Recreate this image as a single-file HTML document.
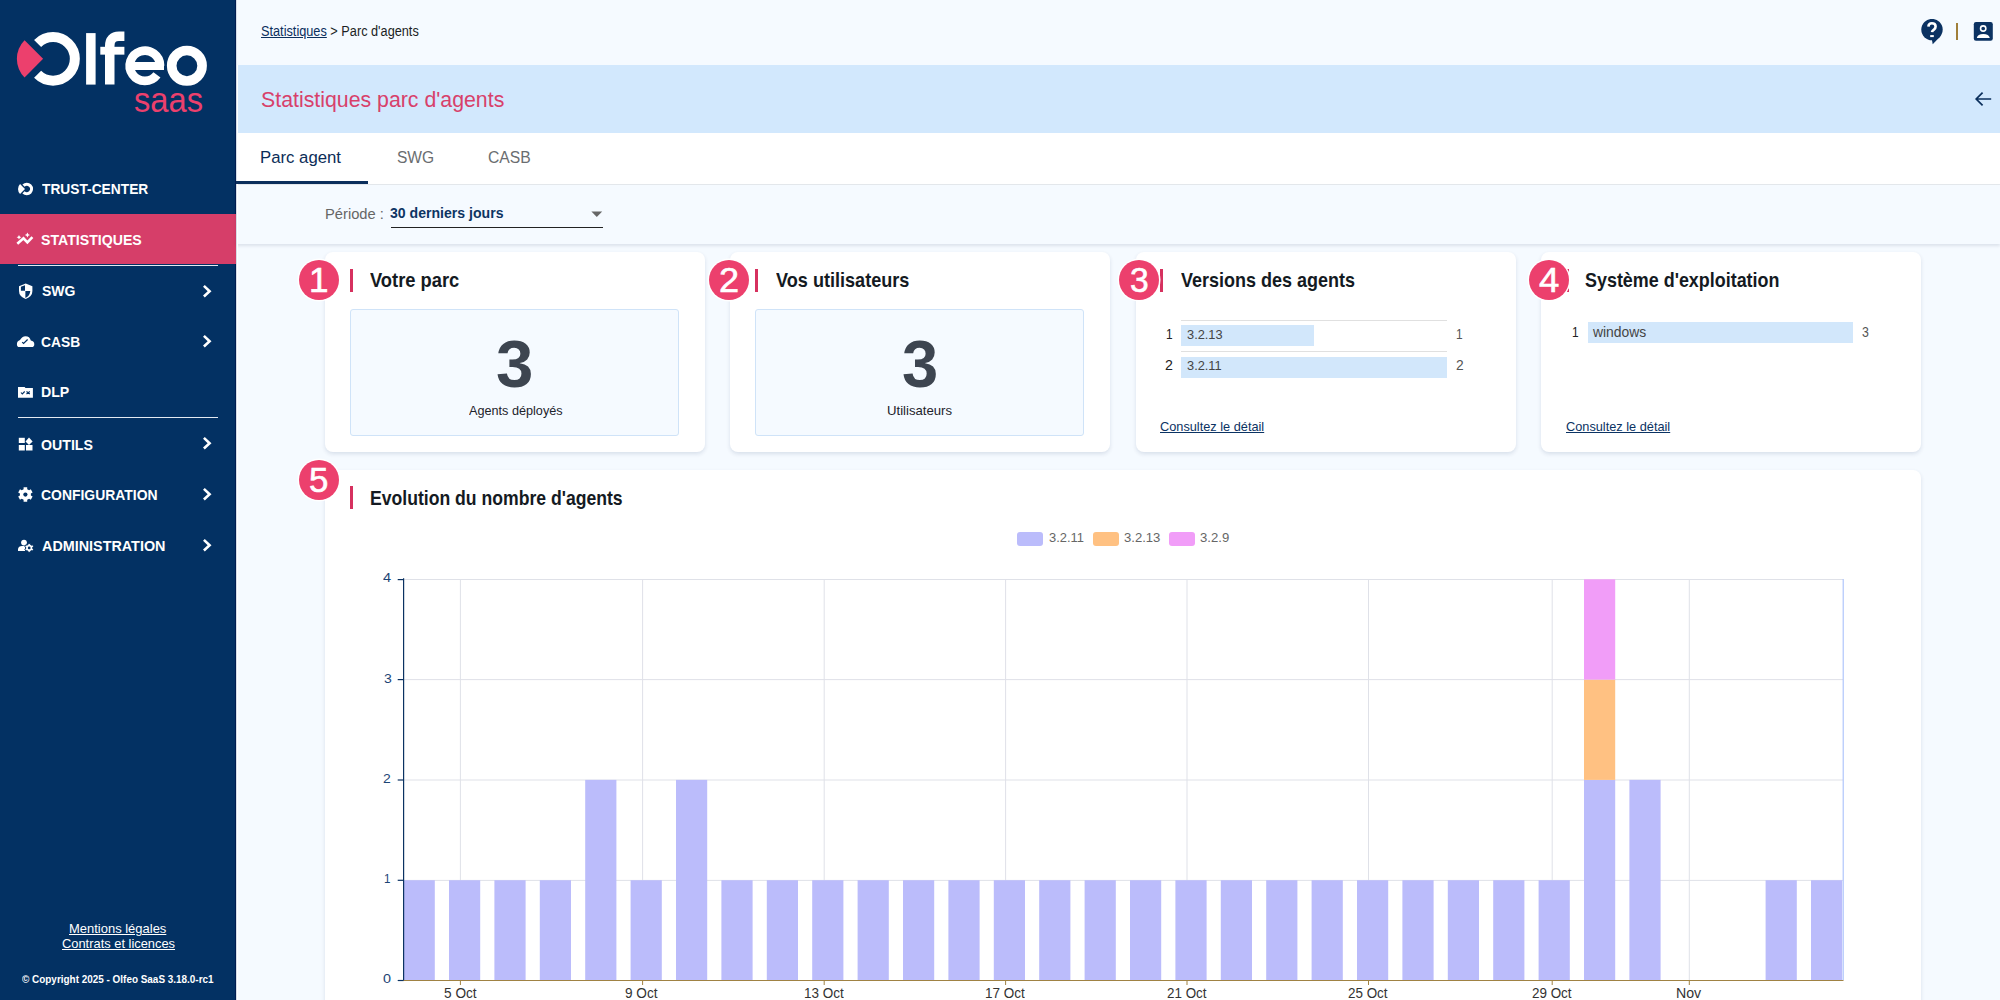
<!DOCTYPE html>
<html><head><meta charset="utf-8">
<style>
*{margin:0;padding:0;box-sizing:border-box}
html,body{width:2000px;height:1000px;overflow:hidden;background:#f5faff;font-family:"Liberation Sans",sans-serif}
.abs{position:absolute}
.tx{position:absolute;white-space:nowrap;transform-origin:0 0;line-height:normal}
#side{position:absolute;left:0;top:0;width:236px;height:1000px;background:#033163;border-right:1px solid #011c50}
.sep{position:absolute;left:18px;width:200px;height:1px;background:#e3e9f1}
#topbar{position:absolute;left:236px;top:0;width:1764px;height:65px;background:#f5faff}
#band{position:absolute;left:236px;top:65px;width:1764px;height:67.5px;background:#d2e8fd}
#tabs{position:absolute;left:236px;top:132.5px;width:1764px;height:52.5px;background:#fff;border-bottom:1px solid #e4e8ec}
#period{position:absolute;left:236px;top:185px;width:1764px;height:59px;background:#f5faff;box-shadow:0 2px 3px rgba(0,20,60,.10)}
.card{position:absolute;background:#fff;border-radius:8px;box-shadow:0 2px 4px rgba(0,30,80,.12)}
.badge{position:absolute;width:40px;height:40px;border-radius:50%;background:#ec406d;box-shadow:0 0 0 1.5px #fff}
.bar{position:absolute;width:3px;height:23px;background:#d6315f}
.kpi{position:absolute;background:#f5faff;border:1px solid #cfe3f8;border-radius:3px}
body.measure *{visibility:hidden !important}
body.measure .tx, body.measure .tx *{visibility:visible !important;color:#000 !important;text-decoration:none !important}
html.measure, body.measure{background:#fff !important}
</style></head>
<body>
<style>
.mi{position:absolute;left:0;width:236px;height:50px}
.mi svg{position:absolute}
.chev{position:absolute;left:201px}
</style>
<div id="side">
  <svg class="abs" style="left:0;top:0" width="236" height="130" viewBox="0 0 236 130">
    <path d="M43.1 58.85 L24.54 40.29 A26.25 26.25 0 0 0 24.54 77.41 Z" fill="#ec406d"/>
    <path d="M37.6 43.45 A21.8 21.8 0 1 1 37.6 74.25" fill="none" stroke="#fff" stroke-width="10"/>
    <rect x="86.1" y="33.1" width="9.5" height="51.5" fill="#fff"/>
    <path d="M109.75 84.6 V46 Q109.75 36.3 119 36.3 H124.4" fill="none" stroke="#fff" stroke-width="9.5"/>
    <rect x="100.3" y="46.8" width="24.1" height="7.85" fill="#fff"/>
    <path d="M160 65.75 A15.1 15.1 0 1 0 156.96 74.84" fill="none" stroke="#fff" stroke-width="8.8"/>
    <rect x="131" y="62" width="33" height="8" fill="#fff"/>
    <circle cx="186.9" cy="65.75" r="15.2" fill="none" stroke="#fff" stroke-width="9.6"/>
    <text x="134" y="111.7" font-family="Liberation Sans" font-size="35" fill="#ec406d" textLength="69" lengthAdjust="spacingAndGlyphs">saas</text>
  </svg>
  <div class="abs mi" style="top:163px"><svg style="left:16px;top:180px;top:17px" width="20" height="16" viewBox="16 180 20 16">
    <path d="M25 189 L20.05 184.05 A7 7 0 0 0 20.05 193.95 Z" fill="#fff"/>
    <path d="M23.5 185.65 A4.7 4.7 0 1 1 23.5 192.35" fill="none" stroke="#fff" stroke-width="3.1"/>
  </svg></div>
  <div class="abs mi" style="top:214px;background:#d63e69"><svg style="left:15px;top:18px" width="20" height="14" viewBox="15 232 20 14">
    <polyline points="17.3,243.8 23.5,238.3 27.4,242.4 32.4,237.1" fill="none" stroke="#fff" stroke-width="2.6" stroke-linejoin="miter"/>
    <path d="M19 235 L19.8 236.6 L21.4 237.3 L19.8 238 L19 239.6 L18.2 238 L16.6 237.3 L18.2 236.6Z" fill="#fff"/>
    <path d="M27.4 232.5 L28.3 234.2 L30 235 L28.3 235.8 L27.4 237.5 L26.5 235.8 L24.8 235 L26.5 234.2Z" fill="#fff"/>
  </svg></div>
  <div class="sep" style="top:265px"></div>
  <div class="abs mi" style="top:266px"><svg style="left:18px;top:17px" width="16" height="17" viewBox="18 283 16 17">
    <path d="M25.7 283.6 L32.4 286.2 V291 Q32.4 296.5 25.7 298.9 Q19 296.5 19 291 V286.2 Z" fill="#fff"/>
    <path d="M20.9 286.8 L25 285.3 V290.8 H20.9 Z" fill="#033163"/>
    <path d="M25.4 291 H30.3 Q29.9 295.9 25.4 298 Z" fill="#033163"/>
  </svg><svg class="chev" style="top:17px" width="14" height="16" viewBox="201 283 14 16"><polyline points="203.9,285.9 209.6,291.2 203.9,296.5" fill="none" stroke="#fff" stroke-width="2.6"/></svg></div>
  <div class="abs mi" style="top:316px"><svg style="left:16px;top:18px" width="20" height="14" viewBox="16 334 20 14">
    <path d="M18.3 347 Q16.9 346.9 16.9 344.2 Q16.9 341.1 20 340.1 Q22 336.3 25.5 336.3 Q29.8 336.3 30.8 340.6 Q34.3 341.3 34.3 344.2 Q34.3 347 31.8 347 Z" fill="#fff"/>
    <polyline points="22.2,342.1 23.6,343.5 27.6,339.5" fill="none" stroke="#033163" stroke-width="1.2"/>
  </svg><svg class="chev" style="top:17px" width="14" height="16" viewBox="201 283 14 16"><polyline points="203.9,285.9 209.6,291.2 203.9,296.5" fill="none" stroke="#fff" stroke-width="2.6"/></svg></div>
  <div class="abs mi" style="top:367px"><svg style="left:16px;top:18px" width="20" height="14" viewBox="16 385 20 14">
    <path d="M18 387 H24.6 L25.5 388 H32.9 V397.8 H18 Z" fill="#fff"/>
    <polyline points="21,392.5 22.3,394 24.7,391.5" fill="none" stroke="#033163" stroke-width="1.1"/>
    <path d="M26.5 391.5 L29.8 394 M29.8 391.5 L26.5 394" stroke="#033163" stroke-width="1.1"/>
  </svg></div>
  <div class="sep" style="top:417px"></div>
  <div class="abs mi" style="top:418px"><svg style="left:16px;top:18px" width="20" height="15" viewBox="16 436 20 15">
    <rect x="18.8" y="437.8" width="6" height="5.2" fill="#fff"/>
    <path d="M29 437.6 L32.6 441.5 L29 445 L25.5 441.5 Z" fill="#fff"/>
    <rect x="18.8" y="445" width="6" height="5.5" fill="#fff"/>
    <rect x="26" y="445" width="6.5" height="5.5" fill="#fff"/>
  </svg><svg class="chev" style="top:17px" width="14" height="16" viewBox="201 283 14 16"><polyline points="203.9,285.9 209.6,291.2 203.9,296.5" fill="none" stroke="#fff" stroke-width="2.6"/></svg></div>
  <div class="abs mi" style="top:469px"><svg style="left:16px;top:17px" width="20" height="17" viewBox="16 486 20 17">
    <path d="M23.60 489.20 L23.60 487.22 L27.20 487.22 L27.20 489.20 L29.09 490.29 L30.81 489.30 L32.61 492.42 L30.89 493.41 L30.89 495.59 L32.61 496.58 L30.81 499.70 L29.09 498.71 L27.20 499.80 L27.20 501.78 L23.60 501.78 L23.60 499.80 L21.71 498.71 L19.99 499.70 L18.19 496.58 L19.91 495.59 L19.91 493.41 L18.19 492.42 L19.99 489.30 L21.71 490.29Z" fill="#fff"/>
    <circle cx="25.4" cy="494.6" r="2.1" fill="#033163"/>
  </svg><svg class="chev" style="top:17px" width="14" height="16" viewBox="201 283 14 16"><polyline points="203.9,285.9 209.6,291.2 203.9,296.5" fill="none" stroke="#fff" stroke-width="2.6"/></svg></div>
  <div class="abs mi" style="top:520px"><svg style="left:16px;top:18px" width="20" height="15" viewBox="16 538 20 15">
    <circle cx="24" cy="542.6" r="2.9" fill="#fff"/>
    <path d="M18 551 V549 Q18.5 546 22 546 H25 V551 Z" fill="#fff"/>
    <path d="M28.10 544.47 L28.10 543.43 L30.30 543.43 L30.30 544.47 L31.62 545.23 L32.52 544.71 L33.62 546.62 L32.72 547.14 L32.72 548.66 L33.62 549.18 L32.52 551.09 L31.62 550.57 L30.30 551.33 L30.30 552.37 L28.10 552.37 L28.10 551.33 L26.78 550.57 L25.88 551.09 L24.78 549.18 L25.68 548.66 L25.68 547.14 L24.78 546.62 L25.88 544.71 L26.78 545.23Z" fill="#fff" stroke="#033163" stroke-width="0.9"/><circle cx="29.2" cy="547.9" r="1.4" fill="#033163"/>
  </svg><svg class="chev" style="top:17px" width="14" height="16" viewBox="201 283 14 16"><polyline points="203.9,285.9 209.6,291.2 203.9,296.5" fill="none" stroke="#fff" stroke-width="2.6"/></svg></div>
  </div>

<div id="topbar"></div>
<div id="band"></div>
<div id="tabs"></div>
<div id="period"></div>
<div class="abs" style="left:236px;top:0;width:1px;height:1000px;background:#d5dee8"></div>
<div class="abs" style="left:237px;top:65px;width:1px;height:935px;background:#fff"></div>
<div class="abs" style="left:236px;top:181px;width:132px;height:3px;background:#0b2f5c"></div>
<div class="abs" style="left:391px;top:226.8px;width:211.5px;height:1.4px;background:#222"></div>
<svg class="abs" style="left:591px;top:211px" width="12" height="7" viewBox="0 0 12 7"><path d="M0.4 0.6 H11.2 L5.8 6Z" fill="#666"/></svg>
<svg class="abs" style="left:1921px;top:19px" width="24" height="26" viewBox="0 0 24 26">
  <circle cx="11" cy="10.6" r="10.7" fill="#0b3262"/>
  <path d="M10.6 19 L11.7 25.2 L19.5 17.2 Z" fill="#0b3262"/>
  <path d="M7.4 7.6 Q7.6 4.3 10.9 4.3 Q14.6 4.3 14.6 7.5 Q14.6 9.4 12.9 10.6 Q11.1 11.8 11 13.2" fill="none" stroke="#fff" stroke-width="2.6"/>
  <rect x="9.2" y="16.1" width="3.6" height="2.0" fill="#fff"/>
</svg>
<div class="abs" style="left:1956px;top:23px;width:2px;height:17px;background:#a07f3a"></div>
<svg class="abs" style="left:1973px;top:22px" width="21" height="19" viewBox="0 0 21 19">
  <rect x="0.8" y="0" width="19" height="18.8" rx="2.2" fill="#0b3262"/>
  <circle cx="10.2" cy="6.5" r="2.65" fill="none" stroke="#fff" stroke-width="1.6"/>
  <path d="M3.8 15.9 Q4.6 11.9 10.3 11.9 Q16 11.9 16.8 15.9Z" fill="#fff"/>
</svg>
<svg class="abs" style="left:1974px;top:91px" width="18" height="16" viewBox="0 0 18 16">
  <path d="M17.2 8 H2.3 M8.6 1.6 L2.2 8 L8.6 14.4" fill="none" stroke="#0b2f5c" stroke-width="1.7"/>
</svg>

<div class="card" style="left:325px;top:252px;width:380px;height:200px"></div>
<div class="card" style="left:729.8px;top:252px;width:380.5px;height:200px"></div>
<div class="card" style="left:1135.5px;top:252px;width:380px;height:200px"></div>
<div class="card" style="left:1541px;top:252px;width:380px;height:200px"></div>
<div class="card" style="left:325px;top:469.5px;width:1596px;height:600px"></div>

<div class="bar" style="left:350px;top:269px"></div>
<div class="bar" style="left:755px;top:269px"></div>
<div class="bar" style="left:1160px;top:269px"></div>
<div class="bar" style="left:1566px;top:269px"></div>
<div class="bar" style="left:350px;top:486px"></div>

<div class="kpi" style="left:350px;top:309px;width:329px;height:127px"></div>
<div class="kpi" style="left:755px;top:309px;width:329px;height:127px"></div>

<div class="abs" style="left:1181px;top:320px;width:266px;height:1px;background:#e0e0e0"></div>
<div class="abs" style="left:1181px;top:351px;width:266px;height:1px;background:#e0e0e0"></div>
<div class="abs" style="left:1181.4px;top:325.3px;width:132.7px;height:20.5px;background:#d2e7fb"></div>
<div class="abs" style="left:1181.4px;top:356.9px;width:265.6px;height:20.7px;background:#d2e7fb"></div>
<div class="abs" style="left:1587.7px;top:322.2px;width:265.5px;height:20.8px;background:#d2e7fb"></div>

<div class="badge" style="left:299px;top:259.5px"></div>
<div class="badge" style="left:709px;top:259.5px"></div>
<div class="badge" style="left:1119px;top:259.5px"></div>
<div class="badge" style="left:1529px;top:259.5px"></div>
<div class="badge" style="left:299px;top:459.8px"></div>

<div class="abs" style="left:1017px;top:532px;width:26px;height:14.4px;border-radius:3px;background:#bbbcfb"></div>
<div class="abs" style="left:1093px;top:532px;width:26px;height:14.4px;border-radius:3px;background:#ffc182"></div>
<div class="abs" style="left:1169px;top:532px;width:26px;height:14.4px;border-radius:3px;background:#f19df8"></div>
<svg class="abs" style="left:0;top:0" width="2000" height="1000" viewBox="0 0 2000 1000">
<line x1="403" y1="579.5" x2="1843" y2="579.5" stroke="#dfe1e8" stroke-width="1"/>
<line x1="403" y1="679.6" x2="1843" y2="679.6" stroke="#dfe1e8" stroke-width="1"/>
<line x1="403" y1="780.0" x2="1843" y2="780.0" stroke="#dfe1e8" stroke-width="1"/>
<line x1="403" y1="880.4" x2="1843" y2="880.4" stroke="#dfe1e8" stroke-width="1"/>
<line x1="460.4" y1="579" x2="460.4" y2="980" stroke="#dfe1e8" stroke-width="1"/>
<line x1="642.6" y1="579" x2="642.6" y2="980" stroke="#dfe1e8" stroke-width="1"/>
<line x1="824.2" y1="579" x2="824.2" y2="980" stroke="#dfe1e8" stroke-width="1"/>
<line x1="1005.6" y1="579" x2="1005.6" y2="980" stroke="#dfe1e8" stroke-width="1"/>
<line x1="1187.0" y1="579" x2="1187.0" y2="980" stroke="#dfe1e8" stroke-width="1"/>
<line x1="1368.5" y1="579" x2="1368.5" y2="980" stroke="#dfe1e8" stroke-width="1"/>
<line x1="1552.2" y1="579" x2="1552.2" y2="980" stroke="#dfe1e8" stroke-width="1"/>
<line x1="1689.3" y1="579" x2="1689.3" y2="980" stroke="#dfe1e8" stroke-width="1"/>
<rect x="403.60" y="880.2" width="31.2" height="100.20" fill="#bbbcfb"/>
<rect x="449.00" y="880.2" width="31.2" height="100.20" fill="#bbbcfb"/>
<rect x="494.40" y="880.2" width="31.2" height="100.20" fill="#bbbcfb"/>
<rect x="539.80" y="880.2" width="31.2" height="100.20" fill="#bbbcfb"/>
<rect x="585.20" y="779.9" width="31.2" height="200.50" fill="#bbbcfb"/>
<rect x="630.60" y="880.2" width="31.2" height="100.20" fill="#bbbcfb"/>
<rect x="676.00" y="779.9" width="31.2" height="200.50" fill="#bbbcfb"/>
<rect x="721.40" y="880.2" width="31.2" height="100.20" fill="#bbbcfb"/>
<rect x="766.80" y="880.2" width="31.2" height="100.20" fill="#bbbcfb"/>
<rect x="812.20" y="880.2" width="31.2" height="100.20" fill="#bbbcfb"/>
<rect x="857.60" y="880.2" width="31.2" height="100.20" fill="#bbbcfb"/>
<rect x="903.00" y="880.2" width="31.2" height="100.20" fill="#bbbcfb"/>
<rect x="948.40" y="880.2" width="31.2" height="100.20" fill="#bbbcfb"/>
<rect x="993.80" y="880.2" width="31.2" height="100.20" fill="#bbbcfb"/>
<rect x="1039.20" y="880.2" width="31.2" height="100.20" fill="#bbbcfb"/>
<rect x="1084.60" y="880.2" width="31.2" height="100.20" fill="#bbbcfb"/>
<rect x="1130.00" y="880.2" width="31.2" height="100.20" fill="#bbbcfb"/>
<rect x="1175.40" y="880.2" width="31.2" height="100.20" fill="#bbbcfb"/>
<rect x="1220.80" y="880.2" width="31.2" height="100.20" fill="#bbbcfb"/>
<rect x="1266.20" y="880.2" width="31.2" height="100.20" fill="#bbbcfb"/>
<rect x="1311.60" y="880.2" width="31.2" height="100.20" fill="#bbbcfb"/>
<rect x="1357.00" y="880.2" width="31.2" height="100.20" fill="#bbbcfb"/>
<rect x="1402.40" y="880.2" width="31.2" height="100.20" fill="#bbbcfb"/>
<rect x="1447.80" y="880.2" width="31.2" height="100.20" fill="#bbbcfb"/>
<rect x="1493.20" y="880.2" width="31.2" height="100.20" fill="#bbbcfb"/>
<rect x="1538.60" y="880.2" width="31.2" height="100.20" fill="#bbbcfb"/>
<rect x="1584.00" y="779.9" width="31.2" height="200.50" fill="#bbbcfb"/>
<rect x="1584.00" y="679.6" width="31.2" height="100.30" fill="#ffc182"/>
<rect x="1584.00" y="579.3" width="31.2" height="100.30" fill="#f19df8"/>
<rect x="1629.40" y="779.9" width="31.2" height="200.50" fill="#bbbcfb"/>
<rect x="1765.60" y="880.2" width="31.2" height="100.20" fill="#bbbcfb"/>
<rect x="1811.00" y="880.2" width="31.2" height="100.20" fill="#bbbcfb"/>
<line x1="403.6" y1="578.2" x2="403.6" y2="981" stroke="#0b3262" stroke-width="1.2"/>
<line x1="1843.2" y1="579" x2="1843.2" y2="980" stroke="#a9c1fb" stroke-width="1.1"/>
<line x1="403" y1="980.5" x2="1843.5" y2="980.5" stroke="#a08243" stroke-width="1.2"/>
<line x1="460.4" y1="981" x2="460.4" y2="985" stroke="#a08243" stroke-width="1"/>
<line x1="642.6" y1="981" x2="642.6" y2="985" stroke="#a08243" stroke-width="1"/>
<line x1="824.2" y1="981" x2="824.2" y2="985" stroke="#a08243" stroke-width="1"/>
<line x1="1005.6" y1="981" x2="1005.6" y2="985" stroke="#a08243" stroke-width="1"/>
<line x1="1187.0" y1="981" x2="1187.0" y2="985" stroke="#a08243" stroke-width="1"/>
<line x1="1368.5" y1="981" x2="1368.5" y2="985" stroke="#a08243" stroke-width="1"/>
<line x1="1552.2" y1="981" x2="1552.2" y2="985" stroke="#a08243" stroke-width="1"/>
<line x1="1689.3" y1="981" x2="1689.3" y2="985" stroke="#a08243" stroke-width="1"/>
<line x1="397.7" y1="579.6" x2="403.6" y2="579.6" stroke="#0b3262" stroke-width="1.2"/>
<line x1="397.7" y1="679.6" x2="403.6" y2="679.6" stroke="#0b3262" stroke-width="1.2"/>
<line x1="397.7" y1="780.0" x2="403.6" y2="780.0" stroke="#0b3262" stroke-width="1.2"/>
<line x1="397.7" y1="880.3" x2="403.6" y2="880.3" stroke="#0b3262" stroke-width="1.2"/>
<line x1="397.7" y1="980.5" x2="403.6" y2="980.5" stroke="#0b3262" stroke-width="1.2"/>
</svg>
<div class="tx" id="t0" style="left:42.36px;top:180.00px;font-size:15.1px;color:#fff;font-weight:bold;transform:scaleX(0.9116);">TRUST-CENTER<i class="bl" style="display:inline-block;width:0;height:0;vertical-align:baseline"></i></div>
<div class="tx" id="t1" style="left:41.39px;top:230.81px;font-size:15.1px;color:#fff;font-weight:bold;transform:scaleX(0.9360);">STATISTIQUES<i class="bl" style="display:inline-block;width:0;height:0;vertical-align:baseline"></i></div>
<div class="tx" id="t2" style="left:41.84px;top:282.21px;font-size:15.1px;color:#fff;font-weight:bold;transform:scaleX(0.9280);">SWG<i class="bl" style="display:inline-block;width:0;height:0;vertical-align:baseline"></i></div>
<div class="tx" id="t3" style="left:41.14px;top:332.61px;font-size:15.1px;color:#fff;font-weight:bold;transform:scaleX(0.9142);">CASB<i class="bl" style="display:inline-block;width:0;height:0;vertical-align:baseline"></i></div>
<div class="tx" id="t4" style="left:41.15px;top:383.00px;font-size:15.1px;color:#fff;font-weight:bold;transform:scaleX(0.9373);">DLP<i class="bl" style="display:inline-block;width:0;height:0;vertical-align:baseline"></i></div>
<div class="tx" id="t5" style="left:41.10px;top:435.50px;font-size:15.1px;color:#fff;font-weight:bold;transform:scaleX(0.9379);">OUTILS<i class="bl" style="display:inline-block;width:0;height:0;vertical-align:baseline"></i></div>
<div class="tx" id="t6" style="left:41.11px;top:486.21px;font-size:15.1px;color:#fff;font-weight:bold;transform:scaleX(0.9226);">CONFIGURATION<i class="bl" style="display:inline-block;width:0;height:0;vertical-align:baseline"></i></div>
<div class="tx" id="t7" style="left:41.63px;top:536.71px;font-size:15.1px;color:#fff;font-weight:bold;transform:scaleX(0.9519);">ADMINISTRATION<i class="bl" style="display:inline-block;width:0;height:0;vertical-align:baseline"></i></div>
<div class="tx" id="t8" style="left:69.33px;top:921.41px;font-size:13.6px;color:#fff;transform:scaleX(0.9542);text-decoration:underline">Mentions légales<i class="bl" style="display:inline-block;width:0;height:0;vertical-align:baseline"></i></div>
<div class="tx" id="t9" style="left:61.67px;top:936.21px;font-size:13.6px;color:#fff;transform:scaleX(0.9469);text-decoration:underline">Contrats et licences<i class="bl" style="display:inline-block;width:0;height:0;vertical-align:baseline"></i></div>
<div class="tx" id="t10" style="left:21.84px;top:973.21px;font-size:11.3px;color:#fff;font-weight:bold;transform:scaleX(0.8786);">© Copyright 2025 - Olfeo SaaS 3.18.0-rc1<i class="bl" style="display:inline-block;width:0;height:0;vertical-align:baseline"></i></div>
<div class="tx" id="t11" style="left:260.84px;top:23.51px;font-size:13.8px;color:#1b1f24;transform:scaleX(0.9227);"><span style="color:#0b2f5c;text-decoration:underline">Statistiques</span> &gt; Parc d'agents<i class="bl" style="display:inline-block;width:0;height:0;vertical-align:baseline"></i></div>
<div class="tx" id="t12" style="left:260.81px;top:86.60px;font-size:21.6px;color:#d8406a;transform:scaleX(0.9866);">Statistiques parc d'agents<i class="bl" style="display:inline-block;width:0;height:0;vertical-align:baseline"></i></div>
<div class="tx" id="t13" style="left:260.44px;top:147.21px;font-size:17.4px;color:#0c2d57;transform:scaleX(0.9631);">Parc agent<i class="bl" style="display:inline-block;width:0;height:0;vertical-align:baseline"></i></div>
<div class="tx" id="t14" style="left:396.53px;top:147.21px;font-size:17.4px;color:#6a6d70;transform:scaleX(0.8944);">SWG<i class="bl" style="display:inline-block;width:0;height:0;vertical-align:baseline"></i></div>
<div class="tx" id="t15" style="left:487.90px;top:147.21px;font-size:17.4px;color:#6a6d70;transform:scaleX(0.9036);">CASB<i class="bl" style="display:inline-block;width:0;height:0;vertical-align:baseline"></i></div>
<div class="tx" id="t16" style="left:324.84px;top:205.00px;font-size:15.1px;color:#666;transform:scaleX(0.9754);">Période :<i class="bl" style="display:inline-block;width:0;height:0;vertical-align:baseline"></i></div>
<div class="tx" id="t17" style="left:390.49px;top:204.30px;font-size:15.4px;color:#0d3563;font-weight:bold;transform:scaleX(0.9151);">30 derniers jours<i class="bl" style="display:inline-block;width:0;height:0;vertical-align:baseline"></i></div>
<div class="tx" id="t18" style="left:370.38px;top:269.01px;font-size:20.1px;color:#141a22;font-weight:bold;transform:scaleX(0.9123);">Votre parc<i class="bl" style="display:inline-block;width:0;height:0;vertical-align:baseline"></i></div>
<div class="tx" id="t19" style="left:775.74px;top:269.01px;font-size:20.1px;color:#141a22;font-weight:bold;transform:scaleX(0.9007);">Vos utilisateurs<i class="bl" style="display:inline-block;width:0;height:0;vertical-align:baseline"></i></div>
<div class="tx" id="t20" style="left:1180.81px;top:269.01px;font-size:20.1px;color:#141a22;font-weight:bold;transform:scaleX(0.8959);">Versions des agents<i class="bl" style="display:inline-block;width:0;height:0;vertical-align:baseline"></i></div>
<div class="tx" id="t21" style="left:1584.82px;top:269.01px;font-size:20.1px;color:#141a22;font-weight:bold;transform:scaleX(0.8917);">Système d'exploitation<i class="bl" style="display:inline-block;width:0;height:0;vertical-align:baseline"></i></div>
<div class="tx" id="t22" style="left:369.67px;top:486.51px;font-size:20.1px;color:#141a22;font-weight:bold;transform:scaleX(0.8763);">Evolution du nombre d'agents<i class="bl" style="display:inline-block;width:0;height:0;vertical-align:baseline"></i></div>
<div class="tx" id="t23" style="left:496.25px;top:326.21px;font-size:66px;color:#3d4550;font-weight:bold;transform:scaleX(1.0165);">3<i class="bl" style="display:inline-block;width:0;height:0;vertical-align:baseline"></i></div>
<div class="tx" id="t24" style="left:901.94px;top:326.21px;font-size:66px;color:#3d4550;font-weight:bold;transform:scaleX(0.9855);">3<i class="bl" style="display:inline-block;width:0;height:0;vertical-align:baseline"></i></div>
<div class="tx" id="t25" style="left:468.65px;top:402.50px;font-size:13.6px;color:#1d232b;transform:scaleX(0.9312);">Agents déployés<i class="bl" style="display:inline-block;width:0;height:0;vertical-align:baseline"></i></div>
<div class="tx" id="t26" style="left:887.23px;top:402.50px;font-size:13.6px;color:#1d232b;transform:scaleX(0.9677);">Utilisateurs<i class="bl" style="display:inline-block;width:0;height:0;vertical-align:baseline"></i></div>
<div class="tx" id="t27" style="left:1165.67px;top:325.61px;font-size:14px;color:#222;transform:scaleX(0.8500);">1<i class="bl" style="display:inline-block;width:0;height:0;vertical-align:baseline"></i></div>
<div class="tx" id="t28" style="left:1186.85px;top:326.81px;font-size:13.6px;color:#444;transform:scaleX(0.9426);">3.2.13<i class="bl" style="display:inline-block;width:0;height:0;vertical-align:baseline"></i></div>
<div class="tx" id="t29" style="left:1455.68px;top:325.61px;font-size:14px;color:#555;transform:scaleX(0.8500);">1<i class="bl" style="display:inline-block;width:0;height:0;vertical-align:baseline"></i></div>
<div class="tx" id="t30" style="left:1164.79px;top:357.11px;font-size:14px;color:#222;transform:scaleX(1.0145);">2<i class="bl" style="display:inline-block;width:0;height:0;vertical-align:baseline"></i></div>
<div class="tx" id="t31" style="left:1186.87px;top:358.11px;font-size:13.6px;color:#444;transform:scaleX(0.9425);">3.2.11<i class="bl" style="display:inline-block;width:0;height:0;vertical-align:baseline"></i></div>
<div class="tx" id="t32" style="left:1455.58px;top:357.11px;font-size:14px;color:#555;transform:scaleX(0.9869);">2<i class="bl" style="display:inline-block;width:0;height:0;vertical-align:baseline"></i></div>
<div class="tx" id="t33" style="left:1571.60px;top:323.50px;font-size:14px;color:#222;transform:scaleX(0.8500);">1<i class="bl" style="display:inline-block;width:0;height:0;vertical-align:baseline"></i></div>
<div class="tx" id="t34" style="left:1592.77px;top:324.76px;font-size:13.8px;color:#444;transform:scaleX(1.0072);">windows<i class="bl" style="display:inline-block;width:0;height:0;vertical-align:baseline"></i></div>
<div class="tx" id="t35" style="left:1862.21px;top:323.91px;font-size:14px;color:#555;transform:scaleX(0.8819);">3<i class="bl" style="display:inline-block;width:0;height:0;vertical-align:baseline"></i></div>
<div class="tx" id="t36" style="left:1159.87px;top:419.11px;font-size:13.3px;color:#0b3363;transform:scaleX(0.9590);text-decoration:underline">Consultez le détail<i class="bl" style="display:inline-block;width:0;height:0;vertical-align:baseline"></i></div>
<div class="tx" id="t37" style="left:1565.69px;top:419.11px;font-size:13.3px;color:#0b3363;transform:scaleX(0.9590);text-decoration:underline">Consultez le détail<i class="bl" style="display:inline-block;width:0;height:0;vertical-align:baseline"></i></div>
<div class="tx" id="t38" style="left:1048.83px;top:530.25px;font-size:13.6px;color:#666;transform:scaleX(0.9493);">3.2.11<i class="bl" style="display:inline-block;width:0;height:0;vertical-align:baseline"></i></div>
<div class="tx" id="t39" style="left:1124.36px;top:530.25px;font-size:13.6px;color:#666;transform:scaleX(0.9629);">3.2.13<i class="bl" style="display:inline-block;width:0;height:0;vertical-align:baseline"></i></div>
<div class="tx" id="t40" style="left:1199.78px;top:530.25px;font-size:13.6px;color:#666;transform:scaleX(0.9651);">3.2.9<i class="bl" style="display:inline-block;width:0;height:0;vertical-align:baseline"></i></div>
<div class="tx" id="t41" style="left:309.21px;top:260.01px;font-size:35px;color:#fff;transform:scaleX(1.0022);-webkit-text-stroke:0.6px #fff">1<i class="bl" style="display:inline-block;width:0;height:0;vertical-align:baseline"></i></div>
<div class="tx" id="t42" style="left:718.86px;top:259.81px;font-size:35px;color:#fff;transform:scaleX(1.0313);-webkit-text-stroke:0.6px #fff">2<i class="bl" style="display:inline-block;width:0;height:0;vertical-align:baseline"></i></div>
<div class="tx" id="t43" style="left:1129.50px;top:260.01px;font-size:35px;color:#fff;transform:scaleX(0.9608);-webkit-text-stroke:0.6px #fff">3<i class="bl" style="display:inline-block;width:0;height:0;vertical-align:baseline"></i></div>
<div class="tx" id="t44" style="left:1539.37px;top:260.01px;font-size:35px;color:#fff;transform:scaleX(1.0437);-webkit-text-stroke:0.6px #fff">4<i class="bl" style="display:inline-block;width:0;height:0;vertical-align:baseline"></i></div>
<div class="tx" id="t45" style="left:308.81px;top:459.71px;font-size:35px;color:#fff;transform:scaleX(0.9959);-webkit-text-stroke:0.6px #fff">5<i class="bl" style="display:inline-block;width:0;height:0;vertical-align:baseline"></i></div>
<div class="tx" id="t46" style="left:382.92px;top:570.01px;font-size:13.5px;color:#1c4474;transform:scaleX(1.0800);">4<i class="bl" style="display:inline-block;width:0;height:0;vertical-align:baseline"></i></div>
<div class="tx" id="t47" style="left:383.60px;top:670.90px;font-size:13.5px;color:#1c4474;transform:scaleX(1.0390);">3<i class="bl" style="display:inline-block;width:0;height:0;vertical-align:baseline"></i></div>
<div class="tx" id="t48" style="left:383.11px;top:771.01px;font-size:13.5px;color:#1c4474;transform:scaleX(1.0346);">2<i class="bl" style="display:inline-block;width:0;height:0;vertical-align:baseline"></i></div>
<div class="tx" id="t49" style="left:383.70px;top:871.01px;font-size:13.5px;color:#1c4474;transform:scaleX(0.8611);">1<i class="bl" style="display:inline-block;width:0;height:0;vertical-align:baseline"></i></div>
<div class="tx" id="t50" style="left:382.85px;top:971.01px;font-size:13.5px;color:#1c4474;transform:scaleX(1.0673);">0<i class="bl" style="display:inline-block;width:0;height:0;vertical-align:baseline"></i></div>
<div class="tx" id="t51" style="left:443.59px;top:984.81px;font-size:14.2px;color:#333;transform:scaleX(0.9617);">5 Oct<i class="bl" style="display:inline-block;width:0;height:0;vertical-align:baseline"></i></div>
<div class="tx" id="t52" style="left:625.24px;top:984.81px;font-size:14.2px;color:#333;transform:scaleX(0.9603);">9 Oct<i class="bl" style="display:inline-block;width:0;height:0;vertical-align:baseline"></i></div>
<div class="tx" id="t53" style="left:803.60px;top:984.81px;font-size:14.2px;color:#333;transform:scaleX(0.9516);">13 Oct<i class="bl" style="display:inline-block;width:0;height:0;vertical-align:baseline"></i></div>
<div class="tx" id="t54" style="left:985.00px;top:984.81px;font-size:14.2px;color:#333;transform:scaleX(0.9521);">17 Oct<i class="bl" style="display:inline-block;width:0;height:0;vertical-align:baseline"></i></div>
<div class="tx" id="t55" style="left:1166.99px;top:984.81px;font-size:14.2px;color:#333;transform:scaleX(0.9452);">21 Oct<i class="bl" style="display:inline-block;width:0;height:0;vertical-align:baseline"></i></div>
<div class="tx" id="t56" style="left:1348.40px;top:984.81px;font-size:14.2px;color:#333;transform:scaleX(0.9462);">25 Oct<i class="bl" style="display:inline-block;width:0;height:0;vertical-align:baseline"></i></div>
<div class="tx" id="t57" style="left:1532.02px;top:984.81px;font-size:14.2px;color:#333;transform:scaleX(0.9466);">29 Oct<i class="bl" style="display:inline-block;width:0;height:0;vertical-align:baseline"></i></div>
<div class="tx" id="t58" style="left:1675.76px;top:984.81px;font-size:14.2px;color:#333;transform:scaleX(0.9989);">Nov<i class="bl" style="display:inline-block;width:0;height:0;vertical-align:baseline"></i></div>
</body></html>
